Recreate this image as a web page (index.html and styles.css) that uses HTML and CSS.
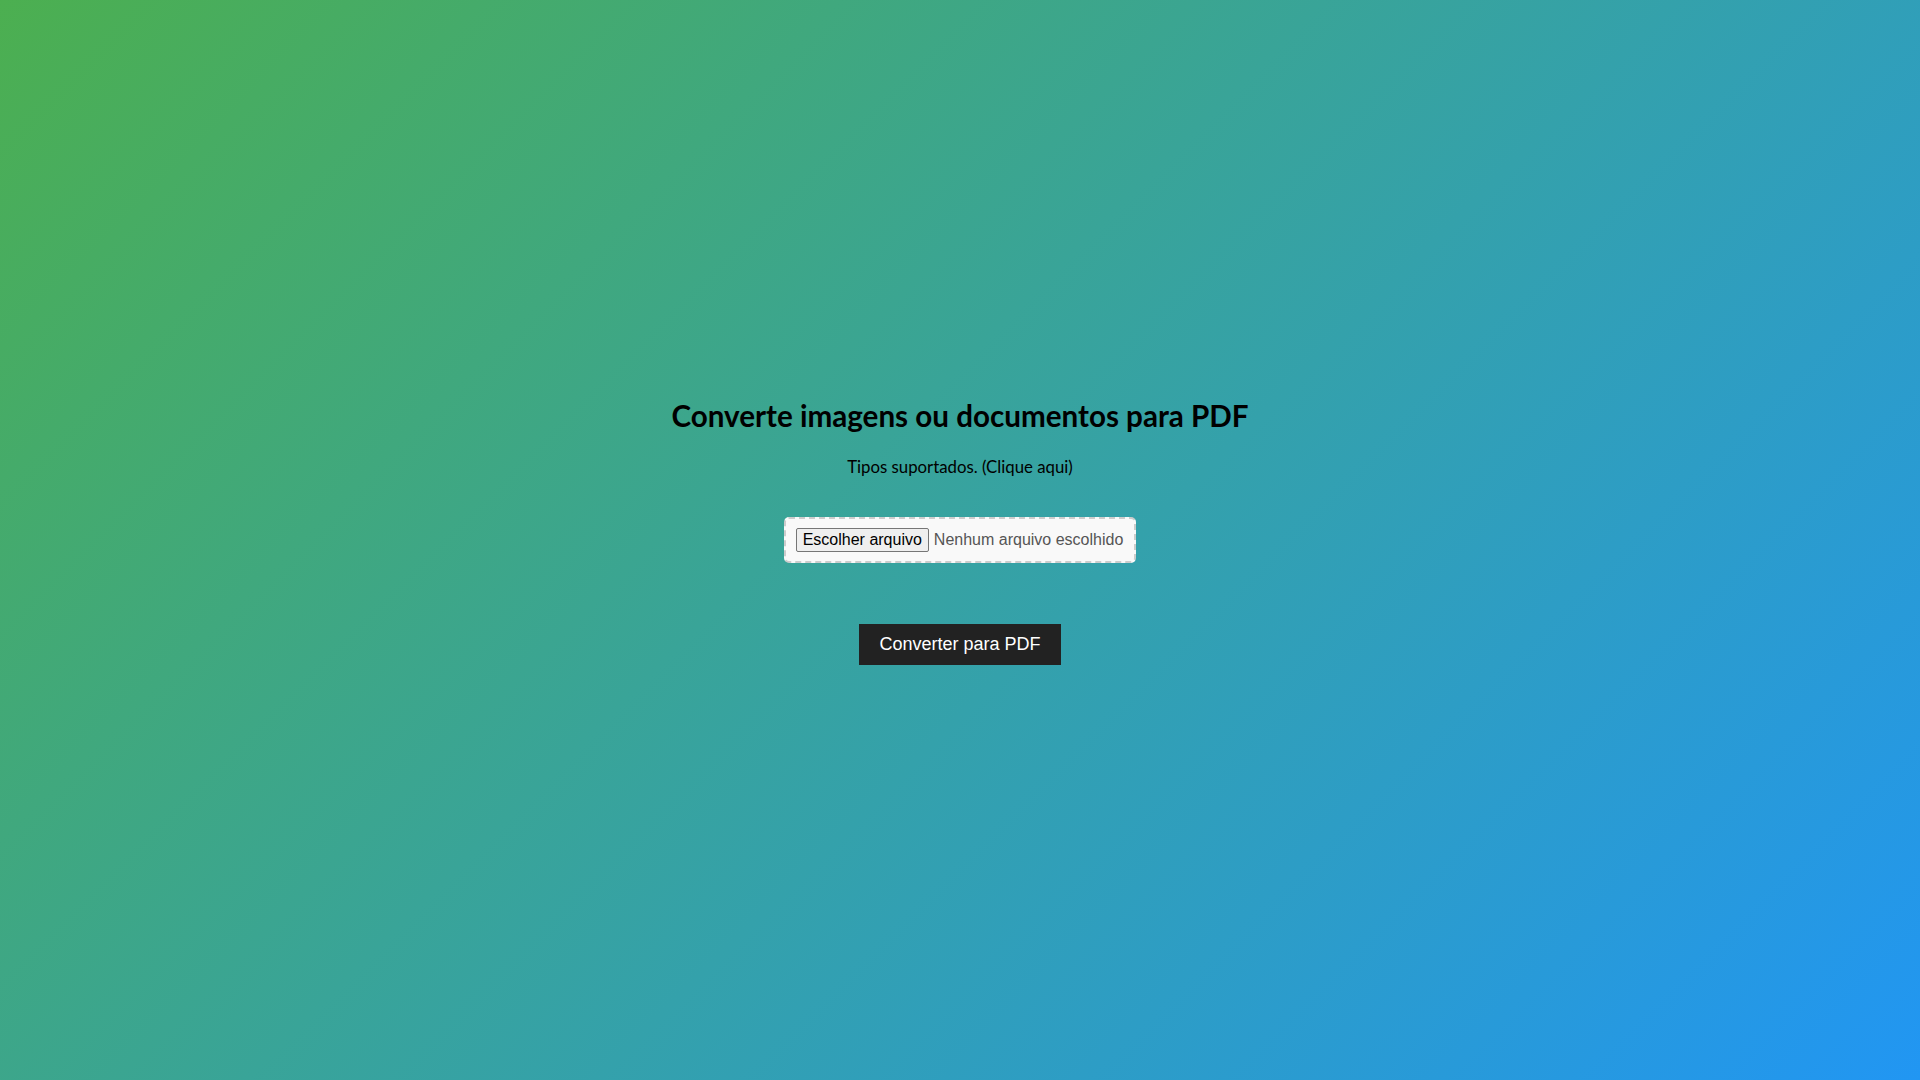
FILE: index.html
```html
<!DOCTYPE html>
<html lang="pt-BR">
<head>
<meta charset="utf-8">
<title>Converter para PDF</title>
<link rel="stylesheet" href="styles.css">
</head>
<body>
<main class="page">
  <h1 class="title">Converte imagens ou documentos para PDF</h1>
  <p class="subtitle">Tipos suportados. (Clique aqui)</p>
  <div class="drop">
    <label class="file">
      <span class="file-btn">Escolher arquivo</span>
      <span class="file-name">Nenhum arquivo escolhido</span>
    </label>
  </div>
  <button class="convert" type="button">Converter para PDF</button>
</main>
</body>
</html>
```
FILE: styles.css
```css
html, body {
  margin: 0;
  height: 100%;
}
body {
  background: linear-gradient(135deg, #4caf50, #2196f3);
  font-family: "Lato", "Liberation Sans", sans-serif;
  color: #000;
}
.page {
  height: 100vh;
  display: flex;
  flex-direction: column;
  align-items: center;
  justify-content: center;
}
.title {
  margin: 0;
  font-size: 29.6px;
  font-weight: 700;
  line-height: 40px;
}
.subtitle {
  margin: 21px 0 0;
  font-size: 16.8px;
  line-height: 20px;
}
.drop {
  margin-top: 40px;
  background: #f9f9f9;
  border: 2px dashed #ccc;
  border-radius: 5px;
  padding: 9px 11px 9px 10px;
}
.file {
  display: flex;
  align-items: center;
  gap: 5px;
  height: 24px;
  font-family: "Liberation Sans", Arial, sans-serif;
  font-size: 16px;
}
.file-btn {
  box-sizing: border-box;
  height: 24px;
  background: #efefef;
  border: 1px solid #767676;
  border-radius: 2px;
  padding: 0 6px;
  line-height: 22px;
  color: #000;
}
.file-name {
  color: #555;
}
.convert {
  margin: 61px 0 19px;
  background: #222;
  color: #fff;
  border: 0;
  border-radius: 0;
  padding: 0 20px;
  height: 41px;
  font-family: "Liberation Sans", Arial, sans-serif;
  font-size: 18px;
}
```
